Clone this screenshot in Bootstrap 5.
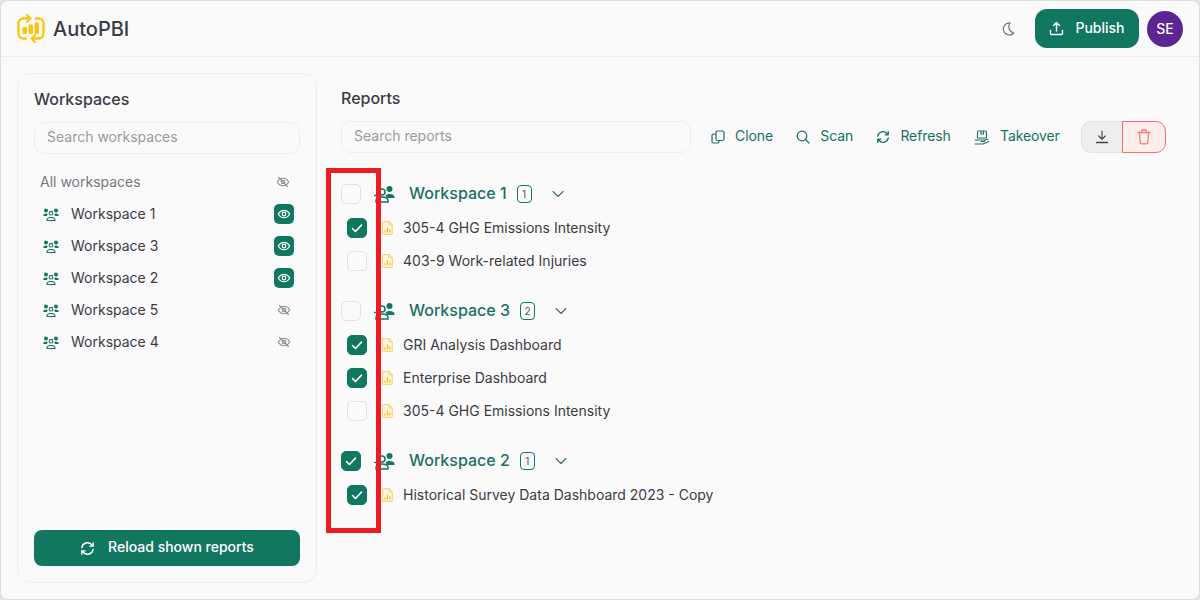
<!DOCTYPE html>
<html lang="en">
<head>
    <meta charset="UTF-8">
    <meta name="viewport" content="width=device-width, initial-scale=1.0">
    <title>AutoPBI</title>
    <link href="https://cdn.jsdelivr.net/npm/bootstrap@5.3.2/dist/css/bootstrap.min.css" rel="stylesheet">
    <style>
        html, body {
            height: 100%;
        }
        body {
            background-color: #e4e4e4;
            font-family: Inter, "Liberation Sans", sans-serif;
            font-size: 14px;
            color: #3b3b45;
            overflow: hidden;
        }
        svg {
            display: block;
            flex-shrink: 0;
        }
        .app-window {
            position: relative;
            height: 600px;
            background: #fafafa;
            border: 1px solid #dedede;
            border-radius: 8px;
            overflow: hidden;
        }
        .app-header {
            height: 56px;
            padding: 0 16px;
            border-bottom: 1px solid #ececec;
        }
        .app-title {
            font-size: 20px;
            font-weight: 500;
            margin-left: 7px;
        }
        .theme-icon {
            color: #6f7480;
            margin-right: 1px;
        }
        .publish-btn {
            width: 104px;
            height: 39px;
            margin-left: 19px;
            background: #127760;
            border: 0;
            border-radius: 12px;
            color: #fff;
            font-size: 14px;
            font-weight: 500;
            gap: 11px;
        }
        .publish-btn span {
            padding-bottom: 3px;
        }
        .publish-btn:hover, .reload-btn:hover {
            background: #127760;
            color: #fff;
        }
        .user-avatar {
            width: 36px;
            height: 36px;
            margin-left: 8px;
            background: #5b2691;
            color: #fff;
            font-size: 14px;
            font-weight: 500;
        }
        .app-body {
            padding: 16px;
            gap: 24px;
        }
        .side-panel {
            width: 300px;
            height: 510px;
            padding: 15px 16px 16px;
            border: 1px solid #eeeeee;
            border-radius: 14px;
        }
        .panel-title {
            font-size: 16px;
            font-weight: 500;
            line-height: 20px;
            margin: 0 0 13px;
        }
        .search-box {
            height: 32px;
            padding: 0 12px 4px;
            font-size: 14px;
            background: #fafafa;
            border: 1px solid #eeeeee;
            border-radius: 10px;
        }
        .search-box::placeholder {
            color: #9a9a9a;
        }
        .reports-search {
            flex: 0 0 350px;
            width: 350px;
        }
        .side-all {
            height: 32px;
            margin-top: 12px;
            padding: 0 10px 0 6px;
            color: #77777f;
        }
        .side-row {
            height: 32px;
            padding: 0 6px 0 9px;
            gap: 12px;
        }
        .side-row > span:first-of-type, .side-all > span {
            padding-bottom: 2px;
        }
        .ws-icon {
            color: #127760;
        }
        .eye-on {
            width: 20px;
            height: 20px;
            background: #127760;
            border-radius: 5px;
        }
        .eye-off {
            width: 20px;
            height: 20px;
        }
        .eye-muted {
            color: #8a8a8a;
        }
        .reload-btn {
            height: 36px;
            background: #127760;
            border: 0;
            border-radius: 8px;
            color: #fff;
            font-size: 14px;
            font-weight: 500;
            gap: 13px;
        }
        .reload-btn span {
            padding-bottom: 4px;
        }
        .main-panel {
            width: 826px;
            padding-top: 15px;
        }
        .action-row {
            gap: 23.3px;
            margin-left: 20px;
        }
        .action-link {
            color: #1b6f66;
            font-size: 14px;
            font-weight: 400;
            letter-spacing: -0.1px;
            gap: 10px;
            padding: 0;
            border: 0;
        }
        .action-link span {
            padding-bottom: 3px;
        }
        .tool-group {
            margin-left: 21px;
        }
        .tool-down, .tool-trash {
            height: 32px;
            padding: 0;
            display: flex;
            align-items: center;
            justify-content: center;
        }
        .tool-down {
            width: 42px;
            background: #eeeeee;
            border: 1px solid #e2e2e2;
            border-right: 0;
            border-radius: 10px 0 0 10px;
        }
        .tool-trash {
            width: 44px;
            background: #feeeeb;
            border: 1px solid #fb6a6a;
            border-radius: 0 10px 10px 0;
        }
        .tree-list {
            margin-top: 24px;
        }
        .tree-group {
            margin-bottom: 17px;
        }
        .tree-head {
            height: 34px;
        }
        .tree-people {
            margin-left: 13px;
            color: #127760;
        }
        .tree-name {
            font-size: 16px;
            font-weight: 500;
            color: #1b6f66;
            margin-left: 13px;
            padding-bottom: 2px;
        }
        .tree-row {
            height: 33px;
            padding-left: 6px;
        }
        .tree-file {
            margin-left: 15px;
        }
        .report-label {
            margin-left: 10px;
        }
        .tree-check.form-check-input {
            width: 20px;
            height: 20px;
            margin: 0;
            background-color: #fafafa;
            border: 1px solid #e2e2e2;
            border-radius: 5px;
            flex-shrink: 0;
        }
        .tree-check.form-check-input:checked[type=checkbox] {
            background-color: #127760;
            border-color: #127760;
            background-image: url("data:image/svg+xml,%3csvg xmlns='http://www.w3.org/2000/svg' viewBox='0 0 20 20'%3e%3cpath fill='none' stroke='%23fff' stroke-width='1.7' stroke-linecap='round' stroke-linejoin='round' d='M5 10.500l3.300 3.300 6.700-7'/%3e%3c/svg%3e");
        }
        .count-tag {
            width: 15px;
            height: 18px;
            margin-left: 10px;
            border: 1px solid #127760;
            border-radius: 4px;
            font-size: 10px;
            color: #55555f;
        }
        .count-caret {
            margin-left: 20px;
            color: #3f6b6b;
        }
        .highlight-box {
            position: absolute;
            left: 325px;
            top: 167px;
            width: 55px;
            height: 365px;
            border: 5px solid #ed1c24;
            pointer-events: none;
        }
    </style>
</head>
<body>
    <svg class="position-absolute" width="0" height="0">
        <defs>
            <symbol id="ic-team" viewBox="0 0 16 13">
                <circle cx="3" cy="2.500" r="2" fill="currentColor"/>
                <circle cx="13" cy="2.500" r="2" fill="currentColor"/>
                <path d="M.2 8c0-1.600 1.300-2.600 2.800-2.600.8 0 1.400.2 1.900.6-.6.5-.9 1.200-.9 2zM15.800 8c0-1.600-1.300-2.600-2.800-2.600-.8 0-1.400.2-1.900.6.6.5.9 1.200.9 2z" fill="currentColor"/>
                <circle cx="8" cy="5.200" r="1.800" fill="none" stroke="currentColor" stroke-width="1.100"/>
                <path d="M4 12.500v-.6c0-1.500 1.700-2.400 4-2.400s4 .9 4 2.400v.6z" fill="none" stroke="currentColor" stroke-width="1.100"/>
            </symbol>
            <symbol id="ic-team-add" viewBox="0 0 22 18">
                <circle cx="8" cy="7" r="3" fill="none" stroke="currentColor" stroke-width="1.500"/>
                <circle cx="15.500" cy="4" r="3" fill="currentColor"/>
                <path d="M11.500 10.500c1-1 2.500-1.500 4-1.500 3 0 5 1.300 5 3v1h-7" fill="currentColor"/>
                <path d="M2 17v-1.500c0-2 2.500-3.500 6-3.500s6 1.500 6 3.500V17z" fill="none" stroke="currentColor" stroke-width="1.500"/>
                <path d="M0 10.500h3" stroke="currentColor" stroke-width="1.300"/>
            </symbol>
            <symbol id="ic-file" viewBox="0 0 11 14">
                <path d="M1.500.7h5.500l3.300 3.300v8.300a1 1 0 0 1-1 1h-7.800a1 1 0 0 1-1-1v-10.600a1 1 0 0 1 1-1z" fill="#fff6dd" stroke="#f6d77c" stroke-width="1.200"/>
                <path d="M7 .7v3.300h3.300" fill="none" stroke="#f6d77c" stroke-width="1"/>
                <path d="M3 11.500V9.500M5.500 11.500V6.500M8 11.500V8.500" stroke="#fbc02d" stroke-width="1.400"/>
            </symbol>
            <symbol id="ic-eye" viewBox="0 0 16 16">
                <path d="M1.500 8C3 5.200 5.300 3.800 8 3.800s5 1.400 6.500 4.200C13 10.800 10.700 12.200 8 12.200S3 10.800 1.500 8z" fill="none" stroke="currentColor" stroke-width="1.300"/>
                <circle cx="8" cy="8" r="2.100" fill="none" stroke="currentColor" stroke-width="1.300"/>
            </symbol>
            <symbol id="ic-eye-off" viewBox="0 0 16 16">
                <path d="M1.500 8C3 5.200 5.300 3.800 8 3.800s5 1.400 6.500 4.200C13 10.800 10.700 12.200 8 12.200S3 10.800 1.500 8z" fill="none" stroke="currentColor" stroke-width="1.200"/>
                <circle cx="8" cy="8" r="2.100" fill="none" stroke="currentColor" stroke-width="1.200"/>
                <path d="M2.500 2.500l11 11" stroke="currentColor" stroke-width="1.300"/>
            </symbol>
            <symbol id="ic-refresh" viewBox="0 0 16 16">
                <path d="M2 7a6 6 0 0 1 10.500-3l1.500 1.500M14 2v3.500h-3.500M14 9a6 6 0 0 1-10.500 3L2 10.500M2 14v-3.500h3.500" fill="none" stroke="currentColor" stroke-width="1.500" stroke-linecap="round" stroke-linejoin="round"/>
            </symbol>
            <symbol id="ic-caret" viewBox="0 0 12 8">
                <path d="M1 1.500l5 5 5-5" fill="none" stroke="currentColor" stroke-width="1.100" stroke-linecap="round" stroke-linejoin="round"/>
            </symbol>
        </defs>
    </svg>

    <div class="app-window">
        <header class="app-header d-flex align-items-center">
            <svg width="29" height="29" viewBox="0 0 29 29" aria-hidden="true">
                <path d="M12 4.500H6.500a5 5 0 0 0-5 5v10a5 5 0 0 0 5 5H9M16 24.500h5.500a5 5 0 0 0 5-5v-10a5 5 0 0 0-5-5H19" fill="none" stroke="#fdc50e" stroke-width="2.400" stroke-linecap="round"/>
                <path d="M10 1l3.500 3.500L10 8M18 21l-3.500 3.500L18 28" fill="none" stroke="#fdc50e" stroke-width="2" stroke-linecap="round" stroke-linejoin="round"/>
                <rect x="5.500" y="13" width="4.500" height="7" rx="1.500" fill="#fdc50e"/>
                <rect x="11.500" y="10.500" width="4.500" height="9.500" rx="1.500" fill="#fdc50e"/>
                <rect x="17.500" y="8.500" width="4.500" height="11.500" rx="1.500" fill="#fdc50e"/>
            </svg>
            <span class="app-title">AutoPBI</span>
            <svg class="theme-icon ms-auto" width="14" height="14" viewBox="0 0 14 14" aria-hidden="true">
                <path d="M9 1a6 6 0 1 0 3.800 10A6.500 6.500 0 0 1 9 1z" fill="none" stroke="currentColor" stroke-width="1.200" stroke-linejoin="round"/>
            </svg>
            <button class="btn publish-btn d-flex align-items-center justify-content-center">
                <svg width="15" height="15" viewBox="0 0 15 15" aria-hidden="true">
                    <path d="M7.500 10V2M4.500 4.500l3-3 3 3M1.500 9.500v3a1 1 0 0 0 1 1h10a1 1 0 0 0 1-1v-3" fill="none" stroke="#fff" stroke-width="1.400" stroke-linecap="round" stroke-linejoin="round"/>
                </svg>
                <span>Publish</span>
            </button>
            <div class="user-avatar rounded-circle d-flex align-items-center justify-content-center">SE</div>
        </header>

        <div class="app-body d-flex">
            <aside class="side-panel d-flex flex-column">
                <h2 class="panel-title">Workspaces</h2>
                <input class="form-control search-box" type="text" placeholder="Search workspaces">
                <div class="side-all d-flex align-items-center justify-content-between">
                    <span>All workspaces</span>
                    <svg class="eye-muted" width="14" height="14"><use href="#ic-eye-off"/></svg>
                </div>
                <div class="side-row d-flex align-items-center">
                    <svg class="ws-icon" width="16" height="13"><use href="#ic-team"/></svg>
                    <span>Workspace 1</span>
                    <span class="eye-on ms-auto d-flex align-items-center justify-content-center text-white"><svg width="14" height="14"><use href="#ic-eye"/></svg></span>
                </div>
                <div class="side-row d-flex align-items-center">
                    <svg class="ws-icon" width="16" height="13"><use href="#ic-team"/></svg>
                    <span>Workspace 3</span>
                    <span class="eye-on ms-auto d-flex align-items-center justify-content-center text-white"><svg width="14" height="14"><use href="#ic-eye"/></svg></span>
                </div>
                <div class="side-row d-flex align-items-center">
                    <svg class="ws-icon" width="16" height="13"><use href="#ic-team"/></svg>
                    <span>Workspace 2</span>
                    <span class="eye-on ms-auto d-flex align-items-center justify-content-center text-white"><svg width="14" height="14"><use href="#ic-eye"/></svg></span>
                </div>
                <div class="side-row d-flex align-items-center">
                    <svg class="ws-icon" width="16" height="13"><use href="#ic-team"/></svg>
                    <span>Workspace 5</span>
                    <span class="eye-off eye-muted ms-auto d-flex align-items-center justify-content-center"><svg width="14" height="14"><use href="#ic-eye-off"/></svg></span>
                </div>
                <div class="side-row d-flex align-items-center">
                    <svg class="ws-icon" width="16" height="13"><use href="#ic-team"/></svg>
                    <span>Workspace 4</span>
                    <span class="eye-off eye-muted ms-auto d-flex align-items-center justify-content-center"><svg width="14" height="14"><use href="#ic-eye-off"/></svg></span>
                </div>
                <button class="btn reload-btn w-100 mt-auto d-flex align-items-center justify-content-center">
                    <svg width="15" height="15"><use href="#ic-refresh"/></svg>
                    <span>Reload shown reports</span>
                </button>
            </aside>

            <main class="main-panel">
                <h2 class="panel-title">Reports</h2>
                <div class="d-flex align-items-center">
                    <input class="form-control search-box reports-search" type="text" placeholder="Search reports">
                    <div class="action-row d-flex align-items-center">
                        <button class="btn action-link d-flex align-items-center">
                            <svg width="14" height="14" viewBox="0 0 14 14"><rect x="5" y="1" width="8" height="9.500" rx="1.500" fill="none" stroke="currentColor" stroke-width="1.200"/><path d="M5 4H2.500A1.500 1.500 0 0 0 1 5.500v6A1.500 1.500 0 0 0 2.500 13h4A1.500 1.500 0 0 0 8 11.500v-1" fill="none" stroke="currentColor" stroke-width="1.200"/></svg>
                            <span>Clone</span>
                        </button>
                        <button class="btn action-link d-flex align-items-center">
                            <svg width="14" height="14" viewBox="0 0 14 14"><circle cx="6" cy="6" r="4.800" fill="none" stroke="currentColor" stroke-width="1.200"/><path d="M9.500 9.500L13 13" stroke="currentColor" stroke-width="1.200" stroke-linecap="round"/></svg>
                            <span>Scan</span>
                        </button>
                        <button class="btn action-link d-flex align-items-center">
                            <svg width="14" height="14"><use href="#ic-refresh"/></svg>
                            <span>Refresh</span>
                        </button>
                        <button class="btn action-link d-flex align-items-center">
                            <svg width="16" height="15" viewBox="0 0 16 15"><path d="M3.500 8V2a1 1 0 0 1 1-1h7a1 1 0 0 1 1 1v6zM7 1v3h2.500V1" fill="none" stroke="currentColor" stroke-width="1.100"/><path d="M1 10h9c1 0 1 1.500 0 1.500H7M1 14h8l6-2.500M11 10l3-.8" fill="none" stroke="currentColor" stroke-width="1.100" stroke-linecap="round"/></svg>
                            <span>Takeover</span>
                        </button>
                    </div>
                    <div class="btn-group tool-group">
                        <button class="btn tool-down" aria-label="Download">
                            <svg width="14" height="14" viewBox="0 0 14 14"><path d="M7 1v8M3.800 6L7 9.300 10.200 6" fill="none" stroke="#3f4450" stroke-width="1.200" stroke-linecap="round" stroke-linejoin="round"/><path d="M1.500 12.500h11" stroke="#3f4450" stroke-width="1.300" stroke-linecap="round"/></svg>
                        </button>
                        <button class="btn tool-trash" aria-label="Delete">
                            <svg width="14" height="16" viewBox="0 0 14 16"><path d="M1 3.500h12M4.500 3.500V2.500A1.500 1.500 0 0 1 6 1h2a1.500 1.500 0 0 1 1.500 1.500v1M2.500 3.500l.7 10a1.500 1.500 0 0 0 1.500 1.400h4.600a1.500 1.500 0 0 0 1.500-1.400l.7-10" fill="none" stroke="#fb7a7a" stroke-width="1.300" stroke-linecap="round" stroke-linejoin="round"/></svg>
                        </button>
                    </div>
                </div>

                <div class="tree-list">
                    <section class="tree-group">
                        <div class="tree-head d-flex align-items-center">
                            <input class="form-check-input tree-check" type="checkbox">
                            <svg class="tree-people" width="22" height="18"><use href="#ic-team-add"/></svg>
                            <span class="tree-name">Workspace 1</span>
                            <span class="count-tag d-flex align-items-center justify-content-center">1</span>
                            <svg class="count-caret" width="12" height="8"><use href="#ic-caret"/></svg>
                        </div>
                        <div class="tree-row d-flex align-items-center">
                            <input class="form-check-input tree-check" type="checkbox" checked>
                            <svg class="tree-file" width="11" height="14"><use href="#ic-file"/></svg>
                            <span class="report-label">305-4 GHG Emissions Intensity</span>
                        </div>
                        <div class="tree-row d-flex align-items-center">
                            <input class="form-check-input tree-check" type="checkbox">
                            <svg class="tree-file" width="11" height="14"><use href="#ic-file"/></svg>
                            <span class="report-label">403-9 Work-related Injuries</span>
                        </div>
                    </section>
                    <section class="tree-group">
                        <div class="tree-head d-flex align-items-center">
                            <input class="form-check-input tree-check" type="checkbox">
                            <svg class="tree-people" width="22" height="18"><use href="#ic-team-add"/></svg>
                            <span class="tree-name">Workspace 3</span>
                            <span class="count-tag d-flex align-items-center justify-content-center">2</span>
                            <svg class="count-caret" width="12" height="8"><use href="#ic-caret"/></svg>
                        </div>
                        <div class="tree-row d-flex align-items-center">
                            <input class="form-check-input tree-check" type="checkbox" checked>
                            <svg class="tree-file" width="11" height="14"><use href="#ic-file"/></svg>
                            <span class="report-label">GRI Analysis Dashboard</span>
                        </div>
                        <div class="tree-row d-flex align-items-center">
                            <input class="form-check-input tree-check" type="checkbox" checked>
                            <svg class="tree-file" width="11" height="14"><use href="#ic-file"/></svg>
                            <span class="report-label">Enterprise Dashboard</span>
                        </div>
                        <div class="tree-row d-flex align-items-center">
                            <input class="form-check-input tree-check" type="checkbox">
                            <svg class="tree-file" width="11" height="14"><use href="#ic-file"/></svg>
                            <span class="report-label">305-4 GHG Emissions Intensity</span>
                        </div>
                    </section>
                    <section class="tree-group">
                        <div class="tree-head d-flex align-items-center">
                            <input class="form-check-input tree-check" type="checkbox" checked>
                            <svg class="tree-people" width="22" height="18"><use href="#ic-team-add"/></svg>
                            <span class="tree-name">Workspace 2</span>
                            <span class="count-tag d-flex align-items-center justify-content-center">1</span>
                            <svg class="count-caret" width="12" height="8"><use href="#ic-caret"/></svg>
                        </div>
                        <div class="tree-row d-flex align-items-center">
                            <input class="form-check-input tree-check" type="checkbox" checked>
                            <svg class="tree-file" width="11" height="14"><use href="#ic-file"/></svg>
                            <span class="report-label">Historical Survey Data Dashboard 2023 - Copy</span>
                        </div>
                    </section>
                </div>
            </main>
        </div>

        <div class="highlight-box"></div>
    </div>
    <script src="https://cdn.jsdelivr.net/npm/bootstrap@5.3.2/dist/js/bootstrap.bundle.min.js"></script>
</body>
</html>
